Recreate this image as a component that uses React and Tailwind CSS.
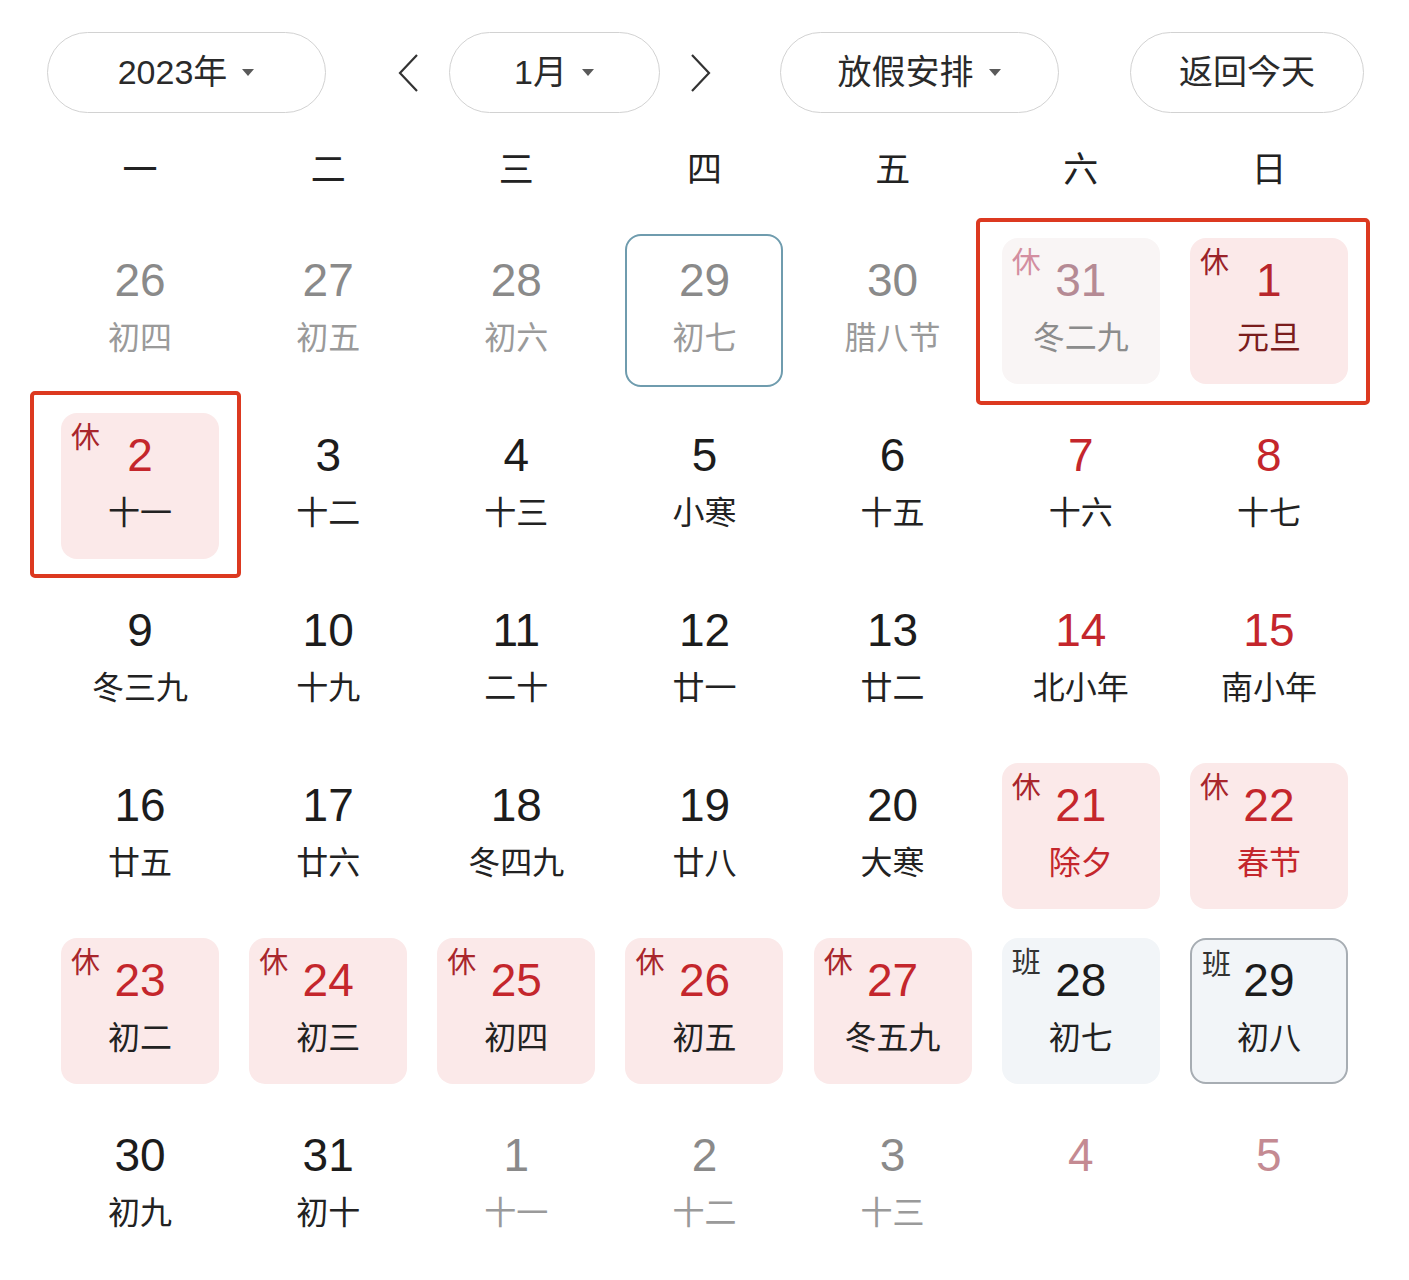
import React from "react";

const FONT = { fontFamily: '"Liberation Sans", "Noto Sans CJK SC", sans-serif' };

// type: prev | today | normal | weekend | rest | restPrev | work | workSel | next | nextWeekend
const rows = [
  [
    [26, "初四", "prev"],
    [27, "初五", "prev"],
    [28, "初六", "prev"],
    [29, "初七", "today"],
    [30, "腊八节", "prev"],
    [31, "冬二九", "restPrev"],
    [1, "元旦", "restNew"],
  ],
  [
    [2, "十一", "rest"],
    [3, "十二", "normal"],
    [4, "十三", "normal"],
    [5, "小寒", "normal"],
    [6, "十五", "normal"],
    [7, "十六", "weekend"],
    [8, "十七", "weekend"],
  ],
  [
    [9, "冬三九", "normal"],
    [10, "十九", "normal"],
    [11, "二十", "normal"],
    [12, "廿一", "normal"],
    [13, "廿二", "normal"],
    [14, "北小年", "weekend"],
    [15, "南小年", "weekend"],
  ],
  [
    [16, "廿五", "normal"],
    [17, "廿六", "normal"],
    [18, "冬四九", "normal"],
    [19, "廿八", "normal"],
    [20, "大寒", "normal"],
    [21, "除夕", "festival"],
    [22, "春节", "festival"],
  ],
  [
    [23, "初二", "rest"],
    [24, "初三", "rest"],
    [25, "初四", "rest"],
    [26, "初五", "rest"],
    [27, "冬五九", "rest"],
    [28, "初七", "work"],
    [29, "初八", "workSel"],
  ],
  [
    [30, "初九", "normal"],
    [31, "初十", "normal"],
    [1, "十一", "next"],
    [2, "十二", "next"],
    [3, "十三", "next"],
    [4, "", "nextWeekend"],
    [5, "", "nextWeekend"],
  ],
];

const styles = {
  prev: { box: "", num: "text-[#8a8a8a]", lunar: "text-[#9a9a9a]" },
  today: {
    box: "border-2 border-[#6f9cae] h-[153px]",
    num: "text-[#8a8a8a]",
    lunar: "text-[#9a9a9a]",
  },
  normal: { box: "", num: "text-[#1c1c1c]", lunar: "text-[#222]" },
  weekend: { box: "", num: "text-[#c4262c]", lunar: "text-[#222]" },
  rest: { box: "bg-[#fbe9e9]", num: "text-[#c4262c]", lunar: "text-[#222]", tag: "休", tagC: "text-[#a8262c]" },
  restNew: { box: "bg-[#fbe9e9]", num: "text-[#b8262c]", lunar: "text-[#7a1c1c]", tag: "休", tagC: "text-[#9a2228]" },
  festival: { box: "bg-[#fbe9e9]", num: "text-[#c4262c]", lunar: "text-[#c4262c]", tag: "休", tagC: "text-[#a8262c]" },
  restPrev: { box: "bg-[#f9f5f5]", num: "text-[#b58a94]", lunar: "text-[#8c8c8c]", tag: "休", tagC: "text-[#d38ea0]" },
  work: { box: "bg-[#f2f5f8]", num: "text-[#1c1c1c]", lunar: "text-[#222]", tag: "班", tagC: "text-[#333]" },
  workSel: {
    box: "bg-[#f2f5f8] border-2 border-[#a7adb3]",
    num: "text-[#1c1c1c]",
    lunar: "text-[#222]",
    tag: "班",
    tagC: "text-[#333]",
  },
  next: { box: "", num: "text-[#8a8a8a]", lunar: "text-[#9a9a9a]" },
  nextWeekend: { box: "", num: "text-[#c48a92]", lunar: "text-[#ddd]" },
};

const Caret = () => (
  <svg width="14" height="9" viewBox="0 0 14 9" className="ml-[14px]">
    <path d="M1 1 L13 1 L7 8 Z" fill="#5a5a5a" />
  </svg>
);

const Chevron = ({ dir }) => (
  <svg width="24" height="40" viewBox="0 0 24 40">
    <path
      d={dir === "left" ? "M21 2 L4 20 L21 38" : "M3 2 L20 20 L3 38"}
      fill="none"
      stroke="#333"
      strokeWidth="2.2"
    />
  </svg>
);

const Pill = ({ w, children }) => (
  <div
    className={`${w} shrink-0 h-[81px] rounded-full border border-[#d2d2d2] flex items-center justify-center text-[34px] text-[#2a2a2a]`}
  >
    {children}
  </div>
);

const Cell = ({ d, l, type }) => {
  const s = styles[type];
  return (
    <div className="h-[175px] flex items-center justify-center">
      <div
        className={`relative w-[158px] h-[146px] rounded-[16px] flex flex-col items-center justify-center pb-3 ${s.box}`}
      >
        {s.tag && (
          <span className={`absolute left-[10px] top-[11px] text-[29px] leading-none ${s.tagC}`}>
            {s.tag}
          </span>
        )}
        <div className={`text-[46px] leading-[56px] ${s.num}`}>{d}</div>
        <div className={`mt-[10px] text-[32px] leading-[40px] h-[40px] ${s.lunar}`}>{l}</div>
      </div>
    </div>
  );
};

export default function App() {
  return (
    <div className="w-[1409px] h-[1280px] bg-white overflow-hidden" style={FONT}>
      <div className="pt-[32px] pl-[47px] flex items-center">
        <Pill w="w-[279px]">
          2023年
          <Caret />
        </Pill>
        <div className="shrink-0 ml-[70px] mr-[29px]">
          <Chevron dir="left" />
        </div>
        <Pill w="w-[211px]">
          1月
          <Caret />
        </Pill>
        <div className="shrink-0 ml-[29px] mr-[67px]">
          <Chevron dir="right" />
        </div>
        <Pill w="w-[279px]">
          放假安排
          <Caret />
        </Pill>
        <div className="shrink-0 ml-[71px]">
          <Pill w="w-[234px]">返回今天</Pill>
        </div>
      </div>

      <div className="mt-[27px] h-[60px] px-[46px] grid grid-cols-7 items-center">
        {["一", "二", "三", "四", "五", "六", "日"].map((w) => (
          <div key={w} className="text-center text-[35px] text-[#222]">
            {w}
          </div>
        ))}
      </div>

      <div className="relative mt-[23px] mx-[46px] grid grid-cols-7">
        {rows.flat().map(([d, l, type], i) => (
          <Cell key={i} d={d} l={l} type={type} />
        ))}
        <div className="absolute left-[930px] top-[-5px] w-[394px] h-[187px] border-4 border-[#dc3920] rounded-[5px]" />
        <div className="absolute left-[-16px] top-[168px] w-[211px] h-[187px] border-4 border-[#dc3920] rounded-[5px]" />
      </div>
    </div>
  );
}
